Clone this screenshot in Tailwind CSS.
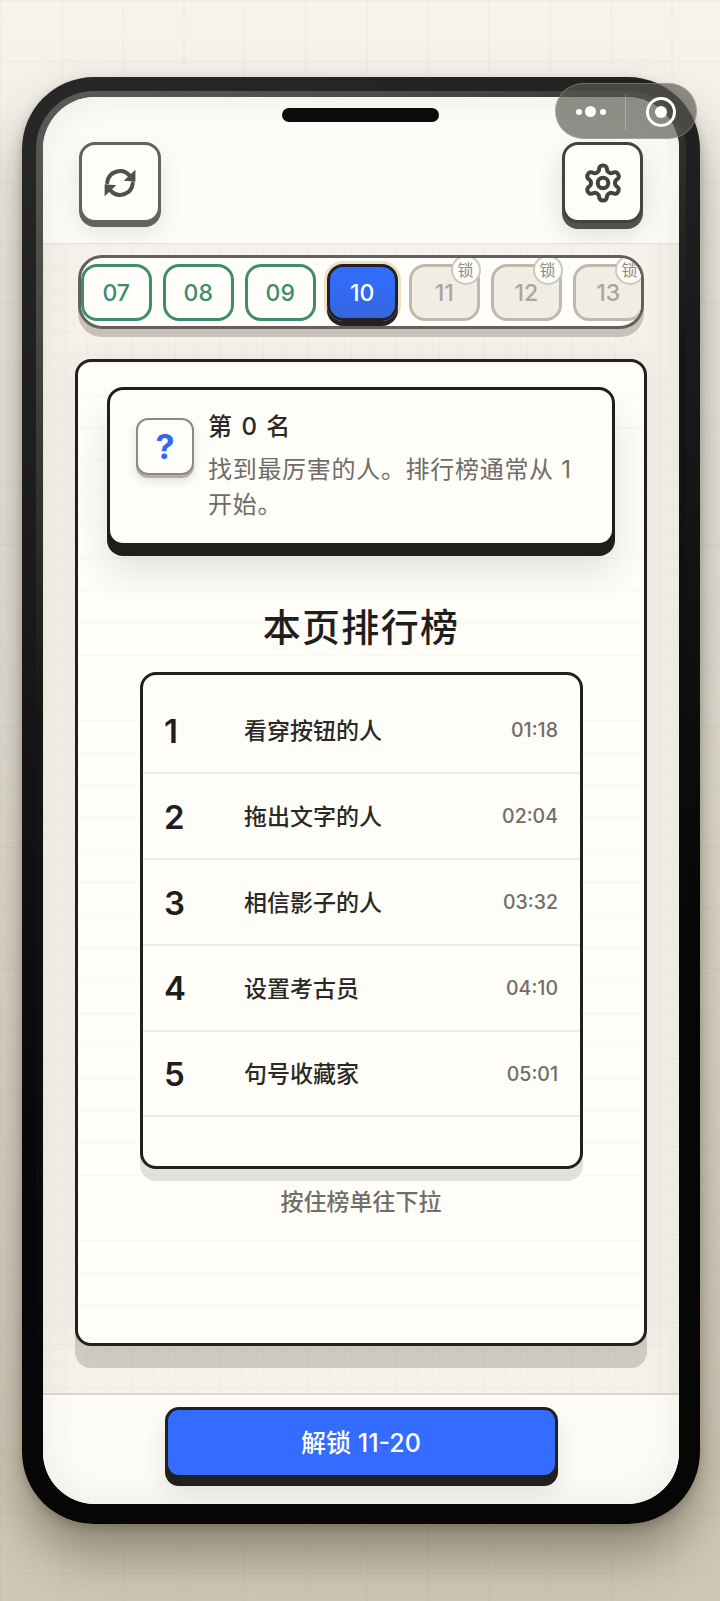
<!DOCTYPE html>
<html lang="zh">
<head>
<meta charset="utf-8">
<script src="https://cdn.jsdelivr.net/npm/@tailwindcss/browser@4"></script>
</head>
<body class="m-0">
<div class="relative w-[720px] h-[1601px] overflow-hidden pt-[77px] pl-[22px] [font-family:Inter,'Noto_Sans_CJK_SC',sans-serif] bg-[linear-gradient(rgba(90,80,60,.05)_1px,transparent_1px),linear-gradient(90deg,rgba(90,80,60,.05)_1px,transparent_1px),linear-gradient(#f6f3ed,#e7e3d8_50%,#cec7b5)] bg-[size:61px_60.5px,61px_60.5px,100%_100%] bg-[position:0_0,0.5px_0,0_0]">

  <!-- phone frame -->
  <div class="relative w-[678px] h-[1447px] rounded-[72px] pt-[14px] px-[14px] pb-[14px] bg-[linear-gradient(160deg,#282828,#1a1a1a_30%,#060606_65%,#060606)] shadow-[0_30px_50px_rgba(60,50,30,.45),0_4px_10px_rgba(60,50,30,.25)]">
    <div class="h-full rounded-[58px] pt-[6px] px-[7px] pb-[6px] bg-[linear-gradient(150deg,#5c5b59_0%,#4a4a48_12%,#161616_35%,#070707_70%)]">
      <div class="relative h-full rounded-[52px] overflow-hidden flex flex-col bg-[#fdfcf7]">

        <!-- header -->
        <div class="h-[147px] shrink-0 flex justify-between items-start pt-[45px] px-[36px] border-b border-[#e6e3da] bg-[#fdfcf7]">
          <button class="w-[82px] h-[81px] rounded-[16px] border-[3px] border-[#64625e] bg-[#fefdf9] shadow-[0_4px_0_#64625e,0_10px_22px_rgba(50,45,35,.12)] flex items-center justify-center">
            <svg width="34" height="34" viewBox="0 0 32 32" fill="none">
              <path d="M4 15.5A12 12 0 0 1 25 9" stroke="#51504c" stroke-width="3.8" stroke-linecap="round"/>
              <path d="M28 16.5A12 12 0 0 1 7 23" stroke="#51504c" stroke-width="3.8" stroke-linecap="round"/>
              <path d="M30.5 3.5V14.8L19.5 13.8Z" fill="#51504c"/>
              <path d="M1.5 28.5V17.2L12.5 18.2Z" fill="#51504c"/>
            </svg>
          </button>
          <button class="w-[81px] h-[81px] rounded-[16px] border-[3px] border-[#44433f] bg-[#fefdf9] shadow-[0_6px_0_#52514d,0_10px_26px_rgba(50,45,35,.16)] flex items-center justify-center">
            <svg width="42" height="42" viewBox="0 0 24 24" fill="none" stroke="#44433f" stroke-width="2.3" stroke-linecap="round" stroke-linejoin="round">
              <path d="M12.22 2h-.44a2 2 0 0 0-2 2v.18a2 2 0 0 1-1 1.73l-.43.25a2 2 0 0 1-2 0l-.15-.08a2 2 0 0 0-2.73.73l-.22.38a2 2 0 0 0 .73 2.73l.15.1a2 2 0 0 1 1 1.72v.51a2 2 0 0 1-1 1.74l-.15.09a2 2 0 0 0-.73 2.73l.22.38a2 2 0 0 0 2.73.73l.15-.08a2 2 0 0 1 2 0l.43.25a2 2 0 0 1 1 1.73V20a2 2 0 0 0 2 2h.44a2 2 0 0 0 2-2v-.18a2 2 0 0 1 1-1.73l.43-.25a2 2 0 0 1 2 0l.15.08a2 2 0 0 0 2.73-.73l.22-.39a2 2 0 0 0-.73-2.73l-.15-.08a2 2 0 0 1-1-1.74v-.5a2 2 0 0 1 1-1.74l.15-.09a2 2 0 0 0 .73-2.73l-.22-.38a2 2 0 0 0-2.73-.73l-.15.08a2 2 0 0 1-2 0l-.43-.25a2 2 0 0 1-1-1.73V4a2 2 0 0 0-2-2z"/>
              <circle cx="12" cy="12" r="3"/>
            </svg>
          </button>
        </div>

        <!-- middle -->
        <div class="flex-1 min-h-0 pt-[11px] px-[32px] bg-[#f4f2ea] bg-[linear-gradient(rgba(80,70,50,.026)_1px,transparent_1px),linear-gradient(90deg,rgba(80,70,50,.026)_1px,transparent_1px)] bg-[size:22px_22px]">
          <!-- level strip -->
          <div class="mx-[3px] w-[566px] h-[74px] rounded-[24px] border-[3px] border-[#64615d] bg-[#fefdf9] shadow-[0_8px_0_rgba(70,62,50,.26)] overflow-hidden flex gap-[11.5px] pt-[6px]">
            <div class="shrink-0 w-[70.5px] h-[57px] pt-[2px] rounded-[16px] border-[3px] border-[#3e8c70] text-[#3e8c70] bg-[#fefdf9] flex items-center justify-center text-[23px] font-medium">07</div>
            <div class="shrink-0 w-[70.5px] h-[57px] pt-[2px] rounded-[16px] border-[3px] border-[#3e8c70] text-[#3e8c70] bg-[#fefdf9] flex items-center justify-center text-[23px] font-medium">08</div>
            <div class="shrink-0 w-[70.5px] h-[57px] pt-[2px] rounded-[16px] border-[3px] border-[#3e8c70] text-[#3e8c70] bg-[#fefdf9] flex items-center justify-center text-[23px] font-medium">09</div>
            <div class="shrink-0 w-[70.5px] h-[57px] pt-[2px] rounded-[16px] border-[3px] border-[#222222] text-white bg-[linear-gradient(#2f6dff,#3766df)] shadow-[0_5px_0_#222222,0_0_0_3px_#efdfc0] flex items-center justify-center text-[23px] font-medium">10</div>
            <div class="relative shrink-0 w-[70.5px] h-[57px] pt-[2px] rounded-[16px] border-[3px] border-[#bdb9ad] text-[#a9a59b] bg-[#f2ede3] flex items-center justify-center text-[23px] font-medium">11
              <span class="absolute -top-[12px] -right-[4px] w-[30px] h-[30px] rounded-full border-[2.5px] border-[#cbc8bf] bg-[#fefdf9] flex items-center justify-center text-[16px] font-normal leading-none text-[#8d8a82]">锁</span></div>
            <div class="relative shrink-0 w-[70.5px] h-[57px] pt-[2px] rounded-[16px] border-[3px] border-[#bdb9ad] text-[#a9a59b] bg-[#f2ede3] flex items-center justify-center text-[23px] font-medium">12
              <span class="absolute -top-[12px] -right-[4px] w-[30px] h-[30px] rounded-full border-[2.5px] border-[#cbc8bf] bg-[#fefdf9] flex items-center justify-center text-[16px] font-normal leading-none text-[#8d8a82]">锁</span></div>
            <div class="relative shrink-0 w-[70.5px] h-[57px] pt-[2px] rounded-[16px] border-[3px] border-[#bdb9ad] text-[#a9a59b] bg-[#f2ede3] flex items-center justify-center text-[23px] font-medium">13
              <span class="absolute -top-[12px] -right-[4px] w-[30px] h-[30px] rounded-full border-[2.5px] border-[#cbc8bf] bg-[#fefdf9] flex items-center justify-center text-[16px] font-normal leading-none text-[#8d8a82]">锁</span></div>
          </div>

          <!-- main card -->
          <div class="mt-[30px] w-[572px] h-[987px] rounded-[16px] border-[3px] border-[#232120] bg-[#fefdf8] bg-[linear-gradient(rgba(80,70,50,.022)_2px,transparent_2px)] bg-[size:100%_32.5px] shadow-[0_22px_0_rgba(60,55,45,.2),0_0_30px_rgba(60,55,45,.07)] pt-[25px] px-[29px]">
            <!-- tip -->
            <div class="w-[508px] h-[159px] rounded-[16px] border-[3px] border-[#1f1e1d] bg-[#fefdf8] shadow-[0_10px_0_#1f1e1d,0_26px_36px_rgba(50,45,35,.13)] flex items-start gap-[14px] pl-[26px] pt-[21px]">
              <div class="mt-[7px] shrink-0 w-[58px] h-[57px] rounded-[12px] border-2 border-[#8d8a83] bg-[#fefdf8] shadow-[0_3px_0_#b3b0a8,0_6px_10px_rgba(50,45,35,.14)] flex items-center justify-center text-[#3369ee] text-[34px] font-bold leading-none">?</div>
              <div class="min-w-0">
                <div class="text-[24px] leading-[32px] font-medium text-[#2a2927] tracking-[1.5px]">第 0 名</div>
                <div class="mt-[9px] text-[24px] leading-[35px] tracking-[.7px] text-[#6f6c67] w-[390px]">找到最厉害的人。排行榜通常从 1 开始。</div>
              </div>
            </div>
            <!-- title -->
            <h1 class="mt-[56px] h-[50px] leading-[50px] text-center text-[38px] font-medium text-[#1f1e1d] tracking-[1.3px]">本页排行榜</h1>
            <!-- board -->
            <div class="mt-[20px] mx-[33px] w-[443px] h-[497px] rounded-[16px] border-[3px] border-[#232120] bg-[#fefdf8] shadow-[0_12px_0_rgba(60,55,45,.14)] pt-[13px]">
              <div class="h-[86px] pt-[2px] border-b-2 border-[#ecebe5] flex items-center pl-[21px] pr-[22px]">
                <span class="w-[80px] text-[33px] font-semibold text-[#1f1e1d] leading-none">1</span>
                <span class="flex-1 text-[23px] font-medium text-[#2a2927]">看穿按钮的人</span>
                <span class="text-[19.5px] font-medium text-[#716e68]">01:18</span>
              </div>
              <div class="h-[86px] pt-[2px] border-b-2 border-[#ecebe5] flex items-center pl-[21px] pr-[22px]">
                <span class="w-[80px] text-[33px] font-semibold text-[#1f1e1d] leading-none">2</span>
                <span class="flex-1 text-[23px] font-medium text-[#2a2927]">拖出文字的人</span>
                <span class="text-[19.5px] font-medium text-[#716e68]">02:04</span>
              </div>
              <div class="h-[86px] pt-[2px] border-b-2 border-[#ecebe5] flex items-center pl-[21px] pr-[22px]">
                <span class="w-[80px] text-[33px] font-semibold text-[#1f1e1d] leading-none">3</span>
                <span class="flex-1 text-[23px] font-medium text-[#2a2927]">相信影子的人</span>
                <span class="text-[19.5px] font-medium text-[#716e68]">03:32</span>
              </div>
              <div class="h-[85.5px] pt-[2px] border-b-2 border-[#ecebe5] flex items-center pl-[21px] pr-[22px]">
                <span class="w-[80px] text-[33px] font-semibold text-[#1f1e1d] leading-none">4</span>
                <span class="flex-1 text-[23px] font-medium text-[#2a2927]">设置考古员</span>
                <span class="text-[19.5px] font-medium text-[#716e68]">04:10</span>
              </div>
              <div class="h-[85.5px] pt-[2px] border-b-2 border-[#ecebe5] flex items-center pl-[21px] pr-[22px]">
                <span class="w-[80px] text-[33px] font-semibold text-[#1f1e1d] leading-none">5</span>
                <span class="flex-1 text-[23px] font-medium text-[#2a2927]">句号收藏家</span>
                <span class="text-[19.5px] font-medium text-[#716e68]">05:01</span>
              </div>
            </div>
            <p class="mt-[17px] text-center text-[23px] leading-[32px] font-medium text-[#716e68]">按住榜单往下拉</p>
          </div>
        </div>

        <!-- footer -->
        <div class="h-[111px] shrink-0 border-t-2 border-[#dcd9cf] bg-[#fdfcf7] flex justify-center pt-[12px]">
          <button class="w-[393px] h-[71px] pt-[2px] rounded-[14px] border-[3px] border-[#232120] bg-[#336cff] shadow-[0_8px_0_#232120,0_14px_24px_rgba(50,45,35,.12)] text-white text-[25px] font-medium">解锁 11-20</button>
        </div>

        <!-- inner vignette -->
        <div class="absolute inset-0 pointer-events-none rounded-[52px] shadow-[inset_0_0_40px_rgba(60,55,45,.09)]"></div>
      </div>
    </div>

    <!-- notch -->
    <div class="absolute top-[31px] left-[260px] w-[157px] h-[14px] rounded-full bg-[#0c0c0c]"></div>
  </div>

  <!-- mini-program capsule -->
  <div class="absolute top-[83px] left-[555px] w-[142px] h-[56px] pt-[1px] rounded-[28px] border border-white/20 bg-[rgba(92,90,82,.68)] flex items-center">
    <div class="w-[69px] flex items-center justify-center gap-[3.5px]">
      <span class="w-[6px] h-[6px] rounded-full bg-white"></span>
      <span class="w-[11px] h-[11px] rounded-full bg-white"></span>
      <span class="w-[6px] h-[6px] rounded-full bg-white"></span>
    </div>
    <div class="w-px h-[36px] bg-white/25"></div>
    <div class="flex-1 flex items-center justify-center">
      <div class="w-[30px] h-[30px] rounded-full border-[3px] border-white flex items-center justify-center">
        <span class="w-[12px] h-[12px] rounded-full bg-white"></span>
      </div>
    </div>
  </div>
</div>
</body>
</html>
